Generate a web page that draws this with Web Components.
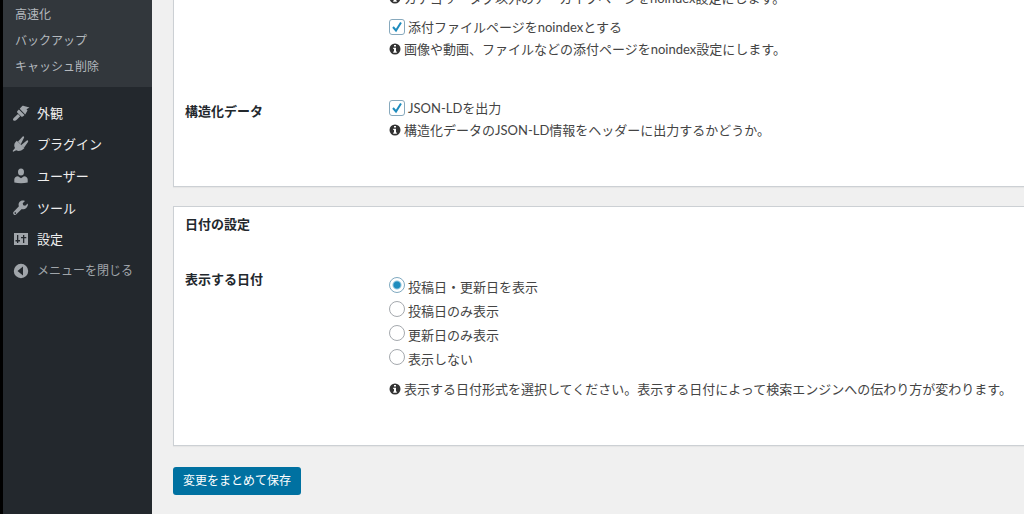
<!DOCTYPE html>
<html lang="ja">
<head>
<meta charset="utf-8">
<title>設定</title>
<style>
body { margin: 0; background: #f0f0f0; color: #444; font: 13px/20px Lato, "Noto Sans CJK JP", sans-serif; overflow: hidden; }
</style>
</head>
<body>
<admin-shell>
  <admin-menu slot="menu">
    <sub-item slot="sub">高速化</sub-item>
    <sub-item slot="sub">バックアップ</sub-item>
    <sub-item slot="sub">キャッシュ削除</sub-item>
    <menu-item icon="brush">外観</menu-item>
    <menu-item icon="plug">プラグイン</menu-item>
    <menu-item icon="user">ユーザー</menu-item>
    <menu-item icon="wrench">ツール</menu-item>
    <menu-item icon="sliders">設定</menu-item>
    <menu-item icon="collapse" muted>メニューを閉じる</menu-item>
  </admin-menu>
  <setting-panel continued>
    <setting-row>
      <info-note spaced>カテゴリ・タグ以外のアーカイブページをnoindex設定にします。</info-note>
      <choice-field name="attachment" label="添付ファイルページをnoindexとする" checked></choice-field>
      <info-note>画像や動画、ファイルなどの添付ページをnoindex設定にします。</info-note>
    </setting-row>
    <setting-row label="構造化データ">
      <choice-field name="jsonld" label="JSON-LDを出力" checked></choice-field>
      <info-note>構造化データのJSON-LD情報をヘッダーに出力するかどうか。</info-note>
    </setting-row>
  </setting-panel>
  <setting-panel heading="日付の設定">
    <setting-row label="表示する日付">
      <radio-list></radio-list>
      <info-note>表示する日付形式を選択してください。表示する日付によって検索エンジンへの伝わり方が変わります。</info-note>
    </setting-row>
  </setting-panel>
  <save-button>変更をまとめて保存</save-button>
</admin-shell>
<script>
const define = (name, render) => customElements.define(name, class extends HTMLElement {
  connectedCallback() {
    if (!this.shadowRoot) this.attachShadow({ mode: "open" }).innerHTML = render(this);
  }
});

const icons = {
  brush: '<path d="M1.300 16.300c-.8-1 .2-2 1.200-3l3.500-3.300 2.200 2.200L5 15.500c-1.200 1.200-2.700 1.800-3.700.8zM5.200 8.600c-.4-.9 0-1.600.7-2.200l1-.9 5.600 5.600-1 1c-.7.700-1.500 1-2.300.5zM7.700 4.700L10 2.300c.6-.6 1.200-.5 2-.3l5.500 1.500-3 1.700 1 1.300-2.300 3.900z"/>',
  plug: '<path d="M1.200 16.800l-.6-.8 2.400-3C1.800 11 2 8.500 3.600 6.900l1.200-1.200 7.600 7.400-1 1c-2.200 2-5 2.600-7.200 1.200zM6 6.500l4.700-5c.8-.6 1.900.4 1.300 1.300L8.800 9.200zM9.300 10l5.500-4.500c1-.5 1.800.6 1.200 1.400l-3.900 5.700z"/>',
  user: '<ellipse cx="9" cy="5" rx="3" ry="3.500"/><path d="M2.300 15.500v-3c0-2 1.500-3 3.700-3.300l3 2 3-2c2.200.3 3.700 1.300 3.700 3.300v3c-4 1-9.400 1-13.400 0z"/>',
  wrench: '<path d="M15.700 4.500l-2.500 2.300-2-.500-.500-2L13 2c-2-.800-4.500-.500-5.700 1.300-.900 1.300-.9 2.700-.4 4L1.700 12.700c-1.700 1.800.800 4.400 2.600 2.600l5.500-5.400c1.500.500 3.200.200 4.500-1 1.400-1.300 1.900-2.900 1.400-4.400zM3 13.300a.8.8 0 1 1 0 1.500.8.8 0 0 1 0-1.500z"/>',
  sliders: '<path fill-rule="evenodd" d="M2 3h14v12H2zM5 5v5H3.500v1.500H5V13h1.300v-1.500h1.700V10H6.300V5zM9 7v1.300h2V13h1.300V8.300h2V7h-2V5H11v2z"/>',
  collapse: '<path fill-rule="evenodd" d="M9 1.800a7.200 7.200 0 1 0 0 14.400A7.200 7.200 0 0 0 9 1.800zM11 4.500v9L5.500 9z"/>'
};

define("admin-shell", () => `
  <style>
    :host { display: grid; grid-template-columns: 152px minmax(0, 1fr); min-height: 100vh; }
    main { display: flex; flex-direction: column; align-items: stretch; gap: 19px; padding-left: 21px; }
  </style>
  <slot name="menu"></slot><main><slot></slot></main>`);

define("admin-menu", () => `
  <style>
    :host { display: block; background: #23282d; border-left: 3px solid #000; }
    .sub { background: #32373c; padding: 2px 0 7px 12px; }
    .items { display: grid; grid-template-rows: repeat(6, 1fr); height: 190px; padding-top: 10px; }
  </style>
  <nav><div class="sub"><slot name="sub"></slot></div><div class="items"><slot></slot></div></nav>`);

define("sub-item", () => `
  <style>
    :host { display: block; }
    a { display: block; font-size: 12px; line-height: 26px; color: #b4b9be; text-decoration: none; }
  </style>
  <a href="#"><slot></slot></a>`);

define("menu-item", el => `
  <style>
    :host { display: flex; }
    a { display: flex; align-items: center; gap: 7px; padding-left: 9px; color: #eee; text-decoration: none; }
    :host([muted]) a { color: #a0a5aa; font-size: 12px; }
    svg { width: 18px; height: 18px; fill: #a0a5aa; }
  </style>
  <a href="#"><svg viewBox="0 0 18 18" aria-hidden="true">${icons[el.getAttribute("icon")]}</svg><slot></slot></a>`);

define("setting-panel", el => {
  const heading = el.getAttribute("heading");
  return `
  <style>
    :host { display: block; background: #fff; border: 1px solid #ccd0d4; border-right: 0; box-shadow: 0 1px 1px rgba(0,0,0,.04); padding: 0 11px 46px; }
    :host([continued]) { border-top: 0; margin-top: -12px; }
    h2 { margin: 0; padding: 7px 0 30px; font-size: 13px; line-height: 20px; color: #23282d; }
  </style>
  ${heading ? `<h2>${heading}</h2>` : ""}<slot></slot>`;
});

define("setting-row", el => `
  <style>
    :host { display: grid; grid-template-columns: 204px minmax(0, 1fr); }
    :host(:not(:last-child)) { padding-bottom: 37px; }
    h3 { margin: 0; padding-top: 5px; font-size: 13px; line-height: 20px; color: #23282d; }
  </style>
  ${el.hasAttribute("label") ? `<h3>${el.getAttribute("label")}</h3>` : "<div></div>"}<div><slot></slot></div>`);

define("choice-field", el => `
  <style>
    :host { display: block; }
    label { display: flex; align-items: center; gap: 3px; height: 24px; }
    input { appearance: none; box-sizing: border-box; width: 16px; height: 16px; margin: 0; border: 1px solid #a5a9ae; border-radius: 3px; background: #fff; flex: none; }
    input:checked { border-color: #87a9bd; background: #fff url('data:image/svg+xml,<svg xmlns="http://www.w3.org/2000/svg" viewBox="0 0 14 14"><path d="M3 7l3 3.500 5-8" fill="none" stroke="%231e8cbe" stroke-width="2"/></svg>'); }
  </style>
  <label><input type="checkbox" name="${el.getAttribute("name")}"${el.hasAttribute("checked") ? " checked" : ""}><span>${el.getAttribute("label")}</span></label>`);

define("radio-list", () => `
  <style>
    :host { display: block; padding: 11px 0 8px; }
    fieldset { margin: 0; padding: 0; border: 0; }
    label { display: flex; gap: 3px; height: 24px; }
    span { padding-top: 2px; }
    input { appearance: none; box-sizing: border-box; width: 16px; height: 16px; margin: 2px 0 0; border: 1px solid #a5a9ae; border-radius: 50%; background: #fff; flex: none; }
    input:checked { border-color: #7fa9c0; background: radial-gradient(circle, #1e8cbe 0 3px, #fff 5px); }
  </style>
  <fieldset aria-label="表示する日付">
    ${["投稿日・更新日を表示", "投稿日のみ表示", "更新日のみ表示", "表示しない"].map((t, i) =>
      `<label><input type="radio" name="date"${i ? "" : " checked"}><span>${t}</span></label>`).join("")}
  </fieldset>`);

define("info-note", () => `
  <style>
    :host { display: block; }
    :host([spaced]) { margin-bottom: 7px; }
    p { display: flex; align-items: center; gap: 3px; margin: 0; height: 20px; white-space: nowrap; }
    svg { width: 12px; height: 12px; flex: none; }
  </style>
  <p><svg viewBox="0 0 12 12" aria-hidden="true"><circle cx="6" cy="6" r="5.500" fill="#333"/><path fill="#fff" d="M5 2h2v1.600H5zM4.200 4.700H7v3.800h.8v1.200H4.200V8.500H5V5.900h-.8z"/></svg><span><slot></slot></span></p>`);

define("save-button", () => `
  <style>
    :host { display: block; margin-top: 2px; }
    button { font: inherit; font-size: 12px; line-height: 28px; padding: 0 10px; border: 0; border-radius: 3px; background: #0071a1; color: #fff; }
  </style>
  <button type="button"><slot></slot></button>`);
</script>
</body>
</html>
